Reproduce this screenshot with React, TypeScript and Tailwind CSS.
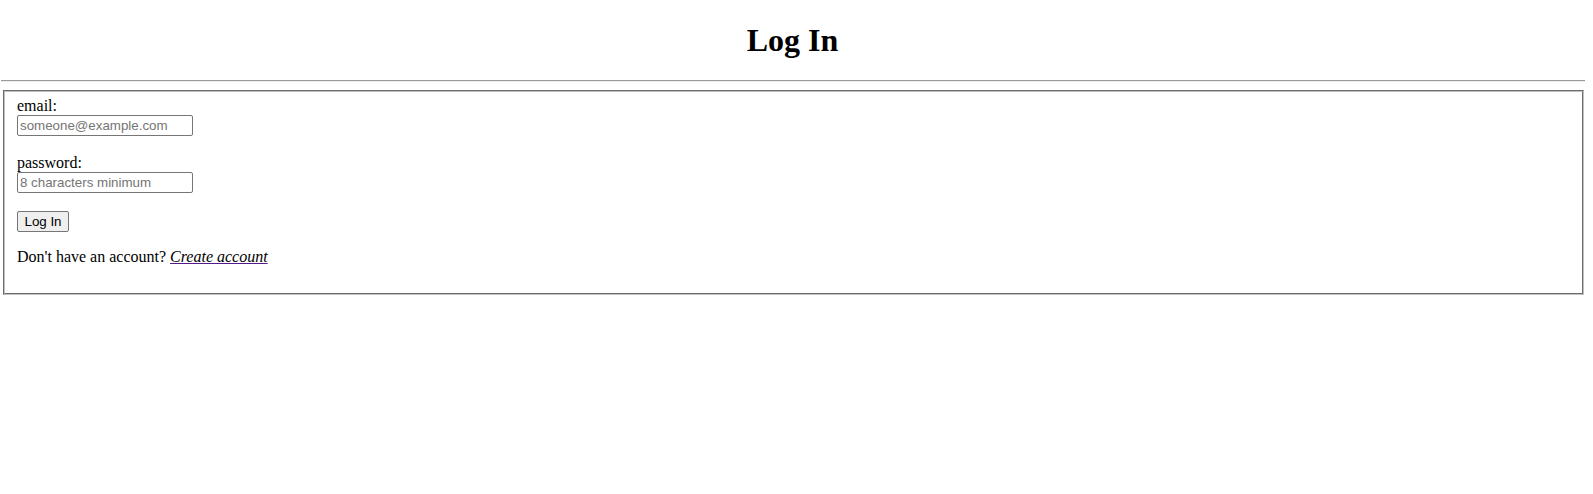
import React from "react";

export default function App() {
  return (
    <div className="w-[1585px] bg-white text-black font-['Liberation_Serif',serif] text-[16px]">
      {/* Header */}
      <h1 className="mt-[22px] mb-[21px] text-center text-[32px] font-bold leading-[37px]">Log In</h1>
      <div className="ml-[1px] border-t border-b border-t-[#9a9a9a] border-b-[#eeeeee]" />

      {/* Form */}
      <div className="mt-[8px] ml-[3px] mr-[1px] border-2 [border-style:groove] border-[#c0c0c0] px-[12px] pt-[5px] pb-[11px]">
        <form className="flex flex-col items-start" onSubmit={(e) => e.preventDefault()}>
          <label htmlFor="email" className="leading-[18px]">email:</label>
          <input
            id="email"
            type="email"
            placeholder="someone@example.com"
            className="h-[21px] w-[176px] rounded-[2px] border border-[#767676] px-[2px] font-['Liberation_Sans',sans-serif] text-[13.33px] placeholder:text-[#757575]"
          />

          <label htmlFor="password" className="mt-[18px] leading-[18px]">password:</label>
          <input
            id="password"
            type="password"
            placeholder="8 characters minimum"
            className="h-[21px] w-[176px] rounded-[2px] border border-[#767676] px-[2px] font-['Liberation_Sans',sans-serif] text-[13.33px] placeholder:text-[#757575]"
          />

          <button
            type="submit"
            className="mt-[18px] h-[21px] w-[52px] rounded-[2px] border border-[#767676] bg-[#efefef] font-['Liberation_Sans',sans-serif] text-[13.33px] leading-none"
          >
            Log In
          </button>

          <p className="mt-[16px] mb-[16px] leading-[18px]">
            Don't have an account?{" "}
            <a href="#" className="italic underline decoration-[#551a8b]">Create account</a>
          </p>
        </form>
      </div>
    </div>
  );
}
